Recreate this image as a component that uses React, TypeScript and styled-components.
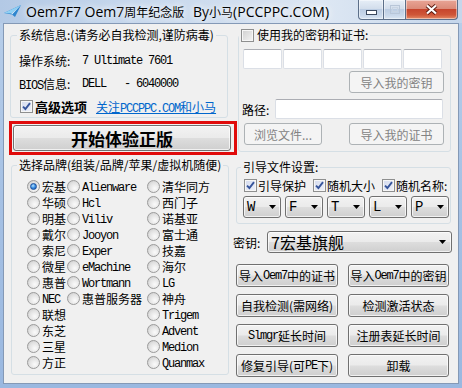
import React from 'react';
import styled, { createGlobalStyle } from 'styled-components';

const CJK = `"Noto Sans CJK SC", "Noto Sans", sans-serif`;
const MONO = `"Liberation Mono", "DejaVu Sans Mono", monospace`;

const GlobalStyle = createGlobalStyle`
  html, body { margin: 0; padding: 0; background: #fff; }
  body { font-family: ${CJK}; font-size: 12px; color: #000; }
  * { box-sizing: border-box; }
`;

const Window = styled.div`
  width: 462px;
  height: 388px;
  display: flex;
  flex-direction: column;
  padding: 0 3px 4px 3px;
  background: linear-gradient(180deg, #b9cfea 0%, #a6c1e4 50%, #9ab8e0 100%);
  overflow: hidden;
`;

const TitleBar = styled.div`
  height: 23px;
  margin: 0 -3px;
  padding: 0 4px 0 3px;
  display: flex;
  align-items: flex-start;
  background: linear-gradient(90deg, #b3c9e5 0%, #c4d6ec 25%, #d0deef 50%, #dde7f3 70%, #c5d6eb 100%);
`;

const AppIcon = styled.svg`
  margin-top: 4px;
  flex: none;
`;

const TitleText = styled.div<{ $w?: number }>`
  margin-top: 3px;
  width: ${p => (p.$w ? `${p.$w}px` : 'auto')};
  font-family: "Open Sans", ${CJK};
  font-size: 14px;
  line-height: 17px;
  white-space: nowrap;
  text-shadow: 0 0 6px #fff, 0 0 10px rgba(255, 255, 255, 0.9);
`;

const TitleCjk = styled.span`
  font-family: ${CJK};
  font-size: 12px;
`;

const Caption = styled.div`
  margin-left: auto;
  display: flex;
  height: 20px;
`;

const CapButton = styled.div<{ $w: number; $kind?: 'close' | 'off' }>`
  width: ${p => p.$w}px;
  height: 20px;
  display: flex;
  align-items: center;
  justify-content: center;
  border: 1px solid #5c6f89;
  border-top: none;
  border-left-width: ${p => (p.$kind === 'close' || p.$kind === 'off' ? 0 : 1)}px;
  border-radius: ${p => (p.$kind === 'close' ? '0 0 4px 0' : p.$kind === 'off' ? '0' : '0 0 0 4px')};
  background: ${p =>
    p.$kind === 'close'
      ? 'linear-gradient(180deg, #e8a596 0%, #db8b79 45%, #c7452d 50%, #cf5638 78%, #e48a66 100%)'
      : 'linear-gradient(180deg, #e6eef7 0%, #d3deec 45%, #bccde3 50%, #c9d8ea 80%, #dae5f2 100%)'};
  box-shadow: inset 0 0 0 1px rgba(255, 255, 255, 0.45);
`;

const Client = styled.div`
  flex: 1;
  border: 1px solid #8499b6;
  background: #f0f0f0;
  display: grid;
  grid-template-columns: 229px 1fr;
  align-items: start;
`;

const Column = styled.div`
  display: flex;
  flex-direction: column;
  align-items: flex-start;
`;

const Group = styled.fieldset<{ $w: number; $h: number; $mt: number; $ml: number; $pl: number; $pr?: number; $pt: number }>`
  width: ${p => p.$w}px;
  height: ${p => p.$h}px;
  margin: ${p => p.$mt}px 0 0 ${p => p.$ml}px;
  padding: ${p => p.$pt}px ${p => p.$pr ?? 0}px 0 ${p => p.$pl}px;
  border: 1px solid #d5dfe5;
  border-radius: 3px;
  min-width: 0;
  display: flex;
  flex-direction: column;
  align-items: flex-start;
`;

const Legend = styled.legend<{ $ml?: number }>`
  margin-left: ${p => p.$ml ?? -2}px;
  padding: 0 2px;
  height: 14px;
  line-height: 14px;
  font-size: 12px;
  display: flex;
  align-items: center;
  gap: 3px;
  white-space: nowrap;
`;

const M = styled.span`
  font-family: ${MONO};
  font-size: 12px;
  letter-spacing: -1.2px;
`;

const InfoRow = styled.div`
  height: 23px;
  display: flex;
  align-items: center;
  white-space: pre;
`;

const InfoLabel = styled.span`
  width: 63px;
  flex: none;
`;

const Check = styled.span<{ $on?: boolean }>`
  width: 13px;
  height: 13px;
  flex: none;
  display: inline-flex;
  align-items: center;
  justify-content: center;
  border: 1px solid #8e8f8f;
  background: ${p =>
    p.$on
      ? 'linear-gradient(135deg, #d4dbee 0%, #eef1f9 100%)'
      : 'linear-gradient(135deg, #cfcfcf 0%, #f4f4f4 100%)'};
  box-shadow: inset 0 0 0 1px #f6f6f6;
`;

const CheckItem = styled.span`
  display: flex;
  align-items: center;
  gap: 1px;
  white-space: nowrap;
`;

const BoldText = styled.span`
  font-size: 13px;
  font-weight: bold;
  margin-left: 2px;
`;

const Link = styled.a`
  margin-left: 9px;
  color: #0066cc;
  text-decoration: underline;
  white-space: nowrap;
`;

const RedFrame = styled.div`
  width: 228px;
  height: 34px;
  margin: 3px 0 0 5px;
  border: 3px solid #e00b0b;
  padding: 1px 3px 1px 1px;
  display: flex;
`;

const Button = styled.div<{ $w?: number; $h?: number; $off?: boolean; $big?: boolean }>`
  width: ${p => (p.$w ? `${p.$w}px` : '100%')};
  height: ${p => (p.$h ? `${p.$h}px` : '100%')};
  flex: none;
  display: flex;
  align-items: center;
  justify-content: center;
  white-space: nowrap;
  border: 1px solid ${p => (p.$off ? '#adb2b5' : '#707070')};
  border-radius: 3px;
  color: ${p => (p.$off ? '#838383' : '#000')};
  font-size: ${p => (p.$big ? 17 : 12)}px;
  font-weight: ${p => (p.$big ? 'bold' : 'normal')};
  background: ${p =>
    p.$off
      ? '#f4f4f4'
      : 'linear-gradient(180deg, #f2f2f2 0%, #ebebeb 48%, #dddddd 52%, #cfcfcf 100%)'};
  box-shadow: inset 0 0 0 1px ${p => (p.$off ? '#f4f4f4' : 'rgba(255, 255, 255, 0.7)')};
`;

const BrandGrid = styled.div`
  margin-left: 8px;
  display: flex;
`;

const BrandCol = styled.div<{ $w?: number }>`
  width: ${p => (p.$w ? `${p.$w}px` : 'auto')};
  display: flex;
  flex-direction: column;
`;

const RadioItem = styled.div`
  height: 16px;
  display: flex;
  align-items: center;
  gap: 2px;
  white-space: nowrap;
`;

const Radio = styled.span`
  width: 13px;
  height: 13px;
  flex: none;
  border-radius: 50%;
  border: 1px solid #9a9a9a;
  background: radial-gradient(circle at 62% 66%, #fbfbfb 0%, #e2e2e2 55%, #c4c4c4 100%);
  display: inline-flex;
  align-items: center;
  justify-content: center;
`;

const RadioDot = styled.span`
  width: 7px;
  height: 7px;
  border-radius: 50%;
  border: 1px solid #1b4f9c;
  background: radial-gradient(circle at 40% 35%, #b9e2ff 0%, #3f93e4 45%, #0f4ea6 100%);
`;

const KeyBoxes = styled.div`
  display: flex;
  gap: 1px;
`;

const TextBox = styled.div<{ $w: number }>`
  width: ${p => p.$w}px;
  height: 20px;
  background: #fff;
  border: 1px solid #dbdfe6;
  border-top-color: #abadb3;
  border-radius: 2px;
`;

const Stack = styled.div<{ $mt: number; $end?: boolean }>`
  margin-top: ${p => p.$mt}px;
  align-self: ${p => (p.$end ? 'flex-end' : 'stretch')};
  display: flex;
  align-items: center;
  justify-content: space-between;
`;

const PathLabel = styled.span`
  margin-left: -1px;
`;

const CheckRow = styled.div`
  height: 16px;
  margin-left: 1px;
  display: flex;
  align-items: center;
  gap: 7px;
`;

const ComboRow = styled.div`
  margin-top: 3px;
  display: flex;
  gap: 4px;
`;

const Combo = styled.div<{ $w: number; $big?: boolean }>`
  width: ${p => p.$w}px;
  height: 22px;
  flex: none;
  display: flex;
  align-items: center;
  padding: 0 ${p => (p.$big ? 5 : 4)}px 0 ${p => (p.$big ? 3 : 3)}px;
  border: 1px solid #707070;
  border-radius: 3px;
  background: linear-gradient(180deg, #f2f2f2 0%, #ebebeb 48%, #dddddd 52%, #cfcfcf 100%);
  box-shadow: inset 0 0 0 1px rgba(255, 255, 255, 0.7);
  font-family: ${p => (p.$big ? CJK : MONO)};
  font-size: ${p => (p.$big ? 16 : 14)}px;
  white-space: nowrap;
`;

const ArrowSvg = styled.svg`
  margin-left: auto;
  flex: none;
`;

const KeyRow = styled.div`
  margin-top: 7px;
  display: flex;
  align-items: center;
  gap: 5px;
`;

const KeyLabel = styled.span`
  width: 29px;
`;

const ButtonGrid = styled.div`
  margin: 11px 0 0 3px;
  display: grid;
  grid-template-columns: 102px 101px;
  grid-auto-rows: 23px;
  column-gap: 10px;
  row-gap: 7px;
`;

const mixed = (s: string) =>
  s.split(/([A-Za-z0-9.]+)/).map((part, i) =>
    /^[A-Za-z0-9.]+$/.test(part) ? <M key={i}>{part}</M> : <React.Fragment key={i}>{part}</React.Fragment>
  );

const Tick = () => (
  <svg width="9" height="9" viewBox="0 0 9 9">
    <path d="M1 4.6 L3.4 7 L8 1.2" fill="none" stroke="#36549b" strokeWidth="1.9" />
  </svg>
);

const Arrow = () => (
  <ArrowSvg width="7" height="4" viewBox="0 0 7 4">
    <path d="M0 0 H7 L3.5 4 Z" fill="#000" />
  </ArrowSvg>
);

const brands1 = ['宏基', '华硕', '明基', '戴尔', '索尼', '微星', '惠普', 'NEC', '联想', '东芝', '三星', '方正'];
const brands2 = ['Alienware', 'Hcl', 'Viliv', 'Jooyon', 'Exper', 'eMachine', 'Wortmann', '惠普服务器'];
const brands3 = ['清华同方', '西门子', '诺基亚', '富士通', '技嘉', '海尔', 'LG', '神舟', 'Trigem', 'Advent', 'Medion', 'Quanmax'];
const bootLetters = ['W', 'F', 'T', 'L', 'P'];
const actions = [
  '导入Oem7中的证书',
  '导入Oem7中的密钥',
  '自我检测(需网络)',
  '检测激活状态',
  'Slmgr延长时间',
  '注册表延长时间',
  '修复引导(可PE下)',
  '卸载',
];

const BrandColumn = ({ items, w, selected }: { items: string[]; w?: number; selected?: string }) => (
  <BrandCol $w={w}>
    {items.map(b => (
      <RadioItem key={b}>
        <Radio>{b === selected && <RadioDot />}</Radio>
        <span>{mixed(b)}</span>
      </RadioItem>
    ))}
  </BrandCol>
);

const App = () => {
  return (
    <>
      <GlobalStyle />
      <Window>
        <TitleBar>
          <AppIcon width="19" height="14" viewBox="0 0 19 14">
            <path d="M1 9 L18 1 L12 13 L9 10.5 Z" fill="#2f86cf" />
            <path d="M1 9 L18 1 L8.5 9.5 Z" fill="#8fd0f4" />
            <path d="M8.5 9.5 L18 1 L9 10.5 Z" fill="#e8f6fd" />
          </AppIcon>
          <TitleText $w={167} style={{ marginLeft: 4 }}>
            Oem7F7 Oem7<TitleCjk>周年纪念版</TitleCjk>
          </TitleText>
          <TitleText>
            By<TitleCjk>小马</TitleCjk>(PCCPPC.COM)
          </TitleText>
          <Caption>
            <CapButton $w={26}>
              <svg width="11" height="5" viewBox="0 0 11 5" style={{ marginTop: 6 }}>
                <rect x="0.5" y="0.5" width="10" height="4" fill="#fff" stroke="#3c4a5e" />
              </svg>
            </CapButton>
            <CapButton $w={22} $kind="off">
              <svg width="10" height="9" viewBox="0 0 10 9">
                <rect x="0.5" y="0.5" width="9" height="8" fill="none" stroke="#b8c6d8" />
                <rect x="2.5" y="2.5" width="5" height="4" fill="none" stroke="#c8d4e2" />
              </svg>
            </CapButton>
            <CapButton $w={52} $kind="close">
              <svg width="13" height="11" viewBox="0 0 13 11">
                <path d="M2 1.5 L11 9.5 M11 1.5 L2 9.5" stroke="#5a1a10" strokeWidth="4" />
                <path d="M2 1.5 L11 9.5 M11 1.5 L2 9.5" stroke="#fff" strokeWidth="2.2" />
              </svg>
            </CapButton>
          </Caption>
        </TitleBar>

        <Client>
          <Column>
            <Group $w={218} $h={90} $mt={4} $ml={6} $pl={8} $pt={7}>
              <Legend>系统信息:(请务必自我检测,谨防病毒)</Legend>
              <InfoRow>
                <InfoLabel>操作系统:</InfoLabel>
                <M>7 Ultimate 7601</M>
              </InfoRow>
              <InfoRow>
                <InfoLabel>
                  <M>BIOS</M>信息:
                </InfoLabel>
                <M>DELL   - 6040000</M>
              </InfoRow>
              <InfoRow style={{ marginLeft: 1 }}>
                <Check $on>
                  <Tick />
                </Check>
                <BoldText>高级选项</BoldText>
                <Link>{mixed('关注PCCPPC.COM和小马')}</Link>
              </InfoRow>
            </Group>

            <RedFrame>
              <Button $big>开始体验正版</Button>
            </RedFrame>

            <Group $w={218} $h={217} $mt={3} $ml={7} $pl={7} $pt={6}>
              <Legend>选择品牌(组装/品牌/苹果/虚拟机随便)</Legend>
              <BrandGrid>
                <BrandColumn items={brands1} w={40} selected="宏基" />
                <BrandColumn items={brands2} w={80} />
                <BrandColumn items={brands3} />
              </BrandGrid>
            </Group>
          </Column>

          <Column>
            <Group $w={213} $h={124} $mt={4} $ml={5} $pl={4} $pr={6} $pt={7}>
              <Legend $ml={-4}>
                <Check />
                使用我的密钥和证书:
              </Legend>
              <KeyBoxes>
                {[0, 1, 2, 3, 4].map(i => (
                  <TextBox key={i} $w={39} />
                ))}
              </KeyBoxes>
              <Stack $mt={2} $end>
                <Button $w={95} $h={22} $off>
                  导入我的密钥
                </Button>
              </Stack>
              <Stack $mt={6}>
                <PathLabel>路径:</PathLabel>
                <TextBox $w={168} style={{ marginRight: 1 }} />
              </Stack>
              <Stack $mt={4}>
                <Button $w={78} $h={22} $off style={{ marginLeft: 1 }}>
                  浏览文件...
                </Button>
                <Button $w={95} $h={22} $off>
                  导入我的证书
                </Button>
              </Stack>
            </Group>

            <Group $w={215} $h={64} $mt={8} $ml={3} $pl={6} $pr={1} $pt={3}>
              <Legend>引导文件设置:</Legend>
              <CheckRow>
                <CheckItem>
                  <Check $on>
                    <Tick />
                  </Check>
                  引导保护
                </CheckItem>
                <CheckItem>
                  <Check $on>
                    <Tick />
                  </Check>
                  随机大小
                </CheckItem>
                <CheckItem>
                  <Check $on>
                    <Tick />
                  </Check>
                  随机名称:
                </CheckItem>
              </CheckRow>
              <ComboRow>
                {bootLetters.map(l => (
                  <Combo key={l} $w={38}>
                    {l}
                    <Arrow />
                  </Combo>
                ))}
              </ComboRow>
            </Group>

            <KeyRow>
              <KeyLabel>密钥:</KeyLabel>
              <Combo $w={185} $big>
                7宏基旗舰
                <Arrow />
              </Combo>
            </KeyRow>

            <ButtonGrid>
              {actions.map(a => (
                <Button key={a}>{mixed(a)}</Button>
              ))}
            </ButtonGrid>
          </Column>
        </Client>
      </Window>
    </>
  );
};

export default App;
